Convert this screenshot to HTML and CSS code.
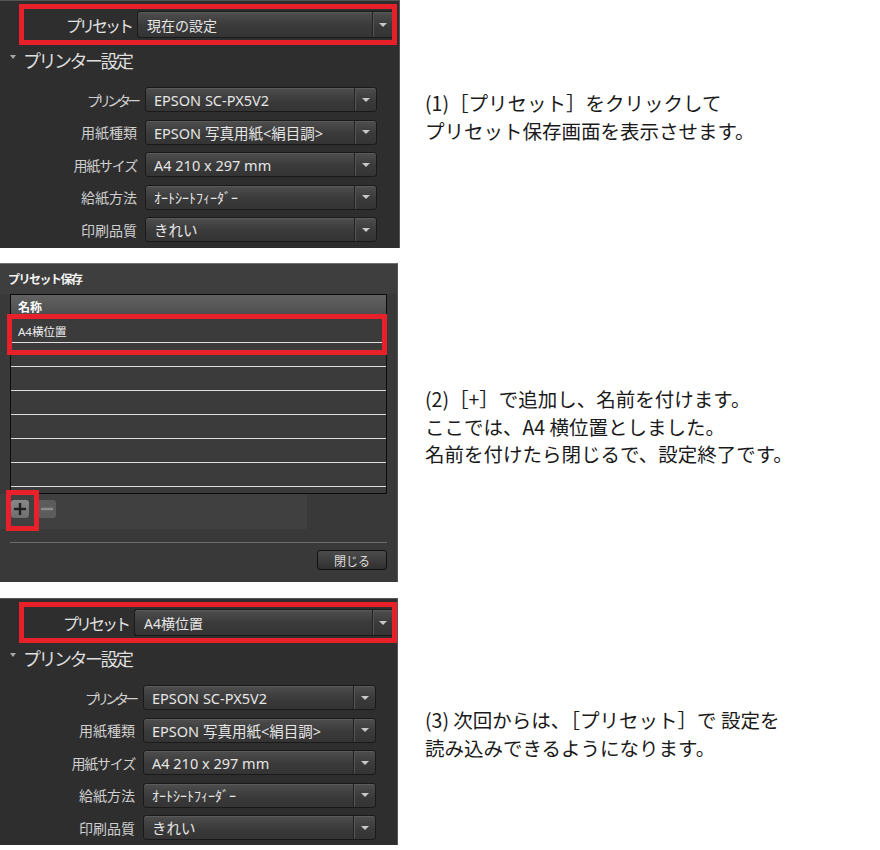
FILE: index.html
```html
<!DOCTYPE html>
<html lang="ja">

<head>
    <meta charset="UTF-8" />
    <title>プリセット保存</title>
    <link rel="stylesheet" href="styles.css">
</head>

<body>
    <div class="page">
        <!-- (1) -->
        <section class="step step-one">
            <div class="panel settings">
                <div class="preset">
                    <span class="preset-label">プリセット</span>
                    <div class="select preset-select"><span class="value">現在の設定</span><span class="btn"></span></div>
                </div>
                <div class="group-head"><span class="tri"></span>プリンター設定</div>
                <div class="rows">
                    <div class="row"><label class="kana">プリンター</label><div class="select"><span class="value">EPSON SC-PX5V2</span><span class="btn"></span></div></div>
                    <div class="row"><label>用紙種類</label><div class="select"><span class="value">EPSON 写真用紙&lt;絹目調&gt;</span><span class="btn"></span></div></div>
                    <div class="row"><label class="semi">用紙サイズ</label><div class="select"><span class="value">A4 210 x 297 mm</span><span class="btn"></span></div></div>
                    <div class="row"><label>給紙方法</label><div class="select"><span class="value half">ｵｰﾄｼｰﾄﾌｨｰﾀﾞｰ</span><span class="btn"></span></div></div>
                    <div class="row"><label>印刷品質</label><div class="select"><span class="value">きれい</span><span class="btn"></span></div></div>
                </div>
            </div>
            <p class="note">(1)［プリセット］をクリックして<br>プリセット保存画面を表示させます。</p>
        </section>

        <!-- (2) -->
        <section class="step step-two">
            <div class="panel dialog">
                <div class="dlg-title">プリセット保存</div>
                <div class="list">
                    <div class="list-head">名称</div>
                    <div class="list-row">A4横位置</div>
                    <div class="list-row"></div>
                    <div class="list-row"></div>
                    <div class="list-row"></div>
                    <div class="list-row"></div>
                    <div class="list-row"></div>
                    <div class="list-row"></div>
                </div>
                <div class="tools">
                    <span class="tool add">
                        <svg width="12" height="12" viewBox="0 0 12 12"><rect x="4.8" y="0" width="2.4" height="12" fill="#1e1e1e"/><rect x="0" y="4.8" width="12" height="2.4" fill="#1e1e1e"/></svg>
                    </span>
                    <span class="tool remove">
                        <svg width="12" height="12" viewBox="0 0 12 12"><rect x="0" y="4.8" width="12" height="2.4" fill="#8c8c8c"/></svg>
                    </span>
                </div>
                <div class="sep"></div>
                <div class="dlg-foot"><span class="close">閉じる</span></div>

                <div class="mark mark-name"></div>
                <div class="mark mark-add"></div>
            </div>
            <p class="note">(2)［+］で追加し、名前を付けます。<br>ここでは、A4 横位置としました。<br>名前を付けたら閉じるで、設定終了です。</p>
        </section>

        <!-- (3) -->
        <section class="step step-three">
            <div class="panel settings last">
                <div class="preset">
                    <span class="preset-label">プリセット</span>
                    <div class="select preset-select"><span class="value">A4横位置</span><span class="btn"></span></div>
                </div>
                <div class="group-head"><span class="tri"></span>プリンター設定</div>
                <div class="rows">
                    <div class="row"><label class="kana">プリンター</label><div class="select"><span class="value">EPSON SC-PX5V2</span><span class="btn"></span></div></div>
                    <div class="row"><label>用紙種類</label><div class="select"><span class="value">EPSON 写真用紙&lt;絹目調&gt;</span><span class="btn"></span></div></div>
                    <div class="row"><label class="semi">用紙サイズ</label><div class="select"><span class="value">A4 210 x 297 mm</span><span class="btn"></span></div></div>
                    <div class="row"><label>給紙方法</label><div class="select"><span class="value half">ｵｰﾄｼｰﾄﾌｨｰﾀﾞｰ</span><span class="btn"></span></div></div>
                    <div class="row"><label>印刷品質</label><div class="select"><span class="value">きれい</span><span class="btn"></span></div></div>
                </div>
            </div>
            <p class="note">(3) 次回からは、［プリセット］で 設定を<br>読み込みできるようになります。</p>
        </section>
    </div>
</body>

</html>
```

FILE: styles.css
```css
body {
    margin: 0;
    padding: 0;
    background: #fff;
    font-family: "Noto Sans", "Noto Sans CJK JP", sans-serif;
}

.page {
    width: 880px;
}

.step {
    display: grid;
    grid-template-columns: 400px 1fr;
    column-gap: 25px;
    align-items: start;
}

.step-two {
    margin-top: 15px;
}

.step-three {
    margin-top: 16px;
}

/* 説明文 */
.note {
    margin: 0;
    font-family: "Noto Sans CJK JP", sans-serif;
    font-size: 19.5px;
    line-height: 27.5px;
    color: #1a1a1a;
}

.step-one .note {
    padding-top: 89px;
}

.step-two .note {
    padding-top: 122px;
}

.step-three .note {
    padding-top: 108px;
}

/* パネル共通 */
.panel {
    box-sizing: border-box;
    background: #2e2e2e;
    border-top: 1px solid #565656;
    border-right: 1px solid #565656;
}

.settings {
    width: 400px;
    height: 248px;
    padding-top: 3px;
}

.settings.last {
    width: 398px;
    height: 247px;
}

.preset {
    box-sizing: border-box;
    margin-left: 19px;
    width: 378px;
    height: 41px;
    border: 5px solid #e8202a;
    display: flex;
    align-items: center;
}

.preset-label {
    width: 107px;
    text-align: right;
    font-size: 16px;
    letter-spacing: -3px;
    color: #e2e2e2;
}

.last .preset-label {
    width: 104px;
}

.select {
    box-sizing: border-box;
    display: flex;
    align-items: stretch;
    height: 25px;
    border: 1px solid #1a1a1a;
    border-radius: 3px;
    background: linear-gradient(#4e4e4e, #3a3a3a 55%, #343434);
    box-shadow: inset 0 1px 0 #5a5a5a;
    color: #e6e6e6;
    font-size: 14.5px;
}

.select .value {
    flex: 1;
    display: flex;
    align-items: center;
    padding-left: 8px;
    white-space: nowrap;
    overflow: hidden;
}

.select .value.half {
    font-size: 14px;
    font-family: "Noto Sans CJK JP", sans-serif;
}

.select .btn {
    width: 21px;
    border-left: 1px solid #222;
    box-shadow: inset 1px 0 0 #555;
    display: flex;
    align-items: center;
    justify-content: center;
}

.select .btn::after {
    content: "";
    border-left: 4px solid transparent;
    border-right: 4px solid transparent;
    border-top: 4px solid #c8c8c8;
}

.preset-select {
    flex: 1;
    height: 27px;
    margin-left: 6px;
    border-right: none;
    border-radius: 3px 0 0 3px;
    font-size: 14px;
}

.preset-select .value {
    padding-left: 9px;
}

.preset-select .btn {
    width: 19px;
}

.group-head {
    height: 30px;
    padding-left: 10px;
    display: flex;
    align-items: center;
    font-size: 18px;
    letter-spacing: -2.5px;
    color: #dedede;
}

.tri {
    width: 0;
    height: 0;
    margin-right: 7px;
    margin-bottom: 7px;
    border-left: 3px solid transparent;
    border-right: 3px solid transparent;
    border-top: 4px solid #a8a8a8;
}

.rows {
    margin-top: 12px;
    display: flex;
    flex-direction: column;
    gap: 7.5px;
}

.row {
    display: flex;
    align-items: center;
}

.row label {
    width: 137px;
    text-align: right;
    font-size: 14px;
    color: #cfcfcf;
}

.row label.kana {
    letter-spacing: -4px;
}

.row label.semi {
    letter-spacing: -1.2px;
}

.row .select {
    margin-left: 8px;
    width: 232px;
}

.last .row label {
    width: 135px;
}

.last .row .select {
    width: 233px;
}

/* プリセット保存ダイアログ */
.dialog {
    position: relative;
    width: 398px;
    height: 319px;
    background: #393939;
    border-top-color: #707070;
}

.dlg-title {
    height: 30px;
    padding-left: 8px;
    display: flex;
    align-items: center;
    background: #3e3e3e;
    font-size: 12px;
    font-weight: bold;
    letter-spacing: -1.5px;
    color: #f2f2f2;
}

.list {
    box-sizing: border-box;
    margin: 0 10px;
    height: 200px;
    border: 1px solid #0c0c0c;
    background: #3b3b3b;
}

.list-head {
    height: 24px;
    padding-left: 7px;
    display: flex;
    align-items: center;
    background: linear-gradient(#626262, #4a4a4a);
    font-size: 12px;
    font-weight: bold;
    color: #fff;
}

.list-row {
    box-sizing: border-box;
    height: 24px;
    padding-left: 7px;
    display: flex;
    align-items: center;
    border-bottom: 1px solid #dedede;
    font-size: 11.5px;
    color: #f0f0f0;
}

.tools {
    box-sizing: border-box;
    width: 307px;
    height: 35px;
    padding: 6px 0 0 11px;
    display: flex;
    align-items: flex-start;
    gap: 9px;
    background: #404040;
}

.tool {
    width: 18px;
    height: 18px;
    border-radius: 3px;
    display: flex;
    align-items: center;
    justify-content: center;
}

.tool.add {
    background: linear-gradient(#888, #6e6e6e);
}

.tool.remove {
    background: #5c5c5c;
}

.sep {
    margin: 13px 10px 0;
    height: 1px;
    background: #6c6c6c;
}

.dlg-foot {
    display: flex;
    justify-content: flex-end;
    padding: 7px 10px 0;
}

.close {
    box-sizing: border-box;
    width: 70px;
    height: 20px;
    display: flex;
    align-items: center;
    justify-content: center;
    border: 1px solid #111;
    border-radius: 3px;
    background: linear-gradient(#4c4c4c, #303030);
    font-family: "Noto Sans CJK JP", sans-serif;
    font-size: 12px;
    color: #dcdcdc;
}

/* 赤枠 */
.mark {
    position: absolute;
    box-sizing: border-box;
    border: 5px solid #e8202a;
}

.mark-name {
    left: 7px;
    top: 50px;
    width: 380px;
    height: 41px;
}

.mark-add {
    left: 6px;
    top: 226px;
    width: 33px;
    height: 41px;
}
```
